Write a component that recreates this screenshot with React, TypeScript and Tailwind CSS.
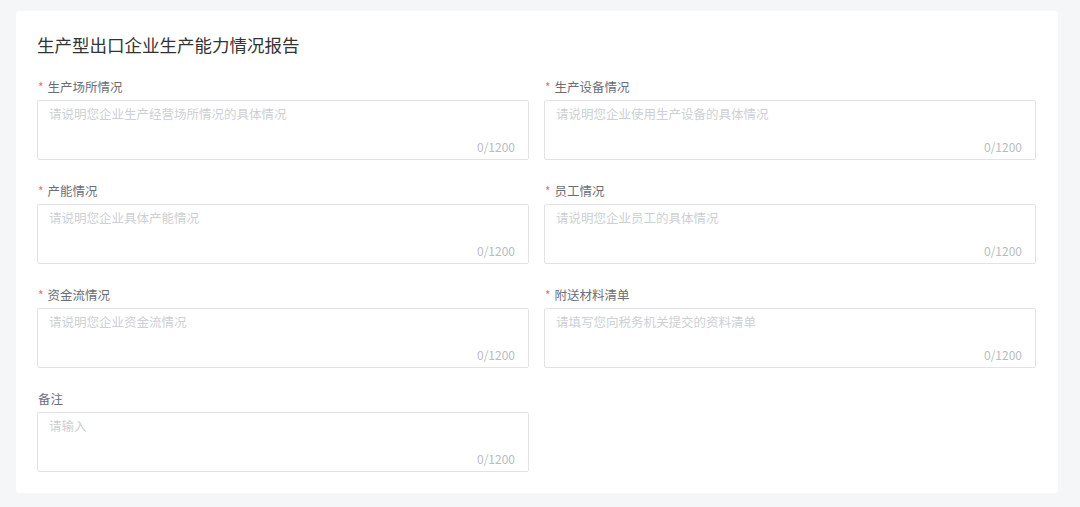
import React from "react";

type Field = {
  label: string;
  placeholder: string;
  required?: boolean;
};

const fields: Field[] = [
  { label: "生产场所情况", placeholder: "请说明您企业生产经营场所情况的具体情况", required: true },
  { label: "生产设备情况", placeholder: "请说明您企业使用生产设备的具体情况", required: true },
  { label: "产能情况", placeholder: "请说明您企业具体产能情况", required: true },
  { label: "员工情况", placeholder: "请说明您企业员工的具体情况", required: true },
  { label: "资金流情况", placeholder: "请说明您企业资金流情况", required: true },
  { label: "附送材料清单", placeholder: "请填写您向税务机关提交的资料清单", required: true },
  { label: "备注", placeholder: "请输入" },
];

function TextField({ field }: { field: Field }) {
  return (
    <div className="flex flex-col">
      <div className="flex items-center h-[20px] text-[12.5px] leading-[20px] text-[#6b6e73] mb-[3px] pl-px">
        {field.required && <span className="text-[#f56c6c] mr-[4px] text-[12px]">*</span>}
        <span>{field.label}</span>
      </div>
      <div className="relative">
        <textarea
          className="block w-full h-[60px] resize-none border border-[#e1e3e8] rounded-[2px] px-[11px] py-[3px] text-[12.5px] leading-[20px] text-[#606266] placeholder:text-[#cdd0d5] outline-none"
          placeholder={field.placeholder}
        />
        <span className="absolute right-[14px] bottom-[5px] text-[12px] leading-[16px] text-[#b9bcc1]">0/1200</span>
      </div>
    </div>
  );
}

export default function App() {
  return (
    <div
      className="min-h-screen bg-[#f5f6f8] pt-[11px] pl-[16px] pr-[22px]"
      style={{ fontFamily: '"Noto Sans CJK SC", "Noto Sans", sans-serif' }}
    >
      <div className="bg-white rounded-[3px] px-[21px] pt-[21px] pb-[21px]">
        <div className="text-[17.5px] leading-[26px] text-[#333333] mb-[19px]">生产型出口企业生产能力情况报告</div>
        <div className="grid grid-cols-[492px_492px] gap-x-[15px] gap-y-[21px]">
          {fields.map((f) => (
            <TextField key={f.label} field={f} />
          ))}
        </div>
      </div>
    </div>
  );
}
